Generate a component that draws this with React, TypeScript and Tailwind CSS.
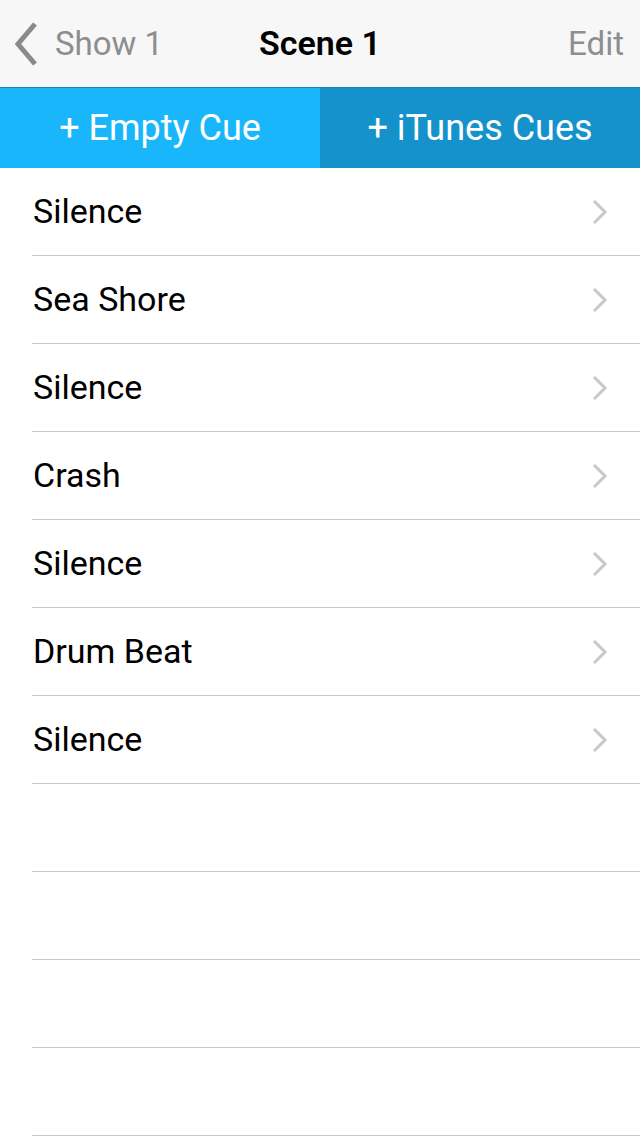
const cues = ["Silence", "Sea Shore", "Silence", "Crash", "Silence", "Drum Beat", "Silence"];

function Disclosure() {
  return (
    <svg width="18" height="26" viewBox="0 0 18 26" className="ml-auto mr-[31px]">
      <path d="M3 2 L14 13 L3 24" fill="none" stroke="#c7c7cc" strokeWidth="3" />
    </svg>
  );
}

export default function App() {
  return (
    <div className="w-[640px] h-[1136px] overflow-hidden bg-white font-['Roboto',sans-serif]">
      {/* Nav bar */}
      <div className="h-[88px] bg-[#f7f7f7] border-b border-[#1b7fae] flex items-center relative">
        <div className="flex items-center pl-[14px] text-[#8e8e8e]">
          <svg width="24" height="44" viewBox="0 0 24 44" className="mr-[17px]">
            <path d="M21 2 L4 22 L21 42" fill="none" stroke="#8a8a8a" strokeWidth="5" />
          </svg>
          <span className="text-[33px] leading-none">Show 1</span>
        </div>
        <div className="absolute left-0 right-0 text-center pointer-events-none">
          <span className="text-[34px] font-semibold text-black leading-none">Scene 1</span>
        </div>
        <span className="ml-auto pr-[16px] text-[33px] text-[#8e8e8e] leading-none">Edit</span>
      </div>

      {/* Add buttons */}
      <div className="flex h-[80px]">
        <div className="flex-1 bg-[#1ab6fb] flex items-center justify-center text-white text-[36px]">
          + Empty Cue
        </div>
        <div className="flex-1 bg-[#1592cb] flex items-center justify-center text-white text-[36px]">
          + iTunes Cues
        </div>
      </div>

      {/* List */}
      <div className="pl-[32px]">
        {cues.map((c, i) => (
          <div key={i} className="h-[88px] border-b border-[#c8c7cc] flex items-center">
            <span className="pl-[1px] text-[34px] text-black">{c}</span>
            <Disclosure />
          </div>
        ))}
        {[0, 1, 2, 3].map((i) => (
          <div key={"e" + i} className="h-[88px] border-b border-[#c8c7cc]" />
        ))}
      </div>
    </div>
  );
}
